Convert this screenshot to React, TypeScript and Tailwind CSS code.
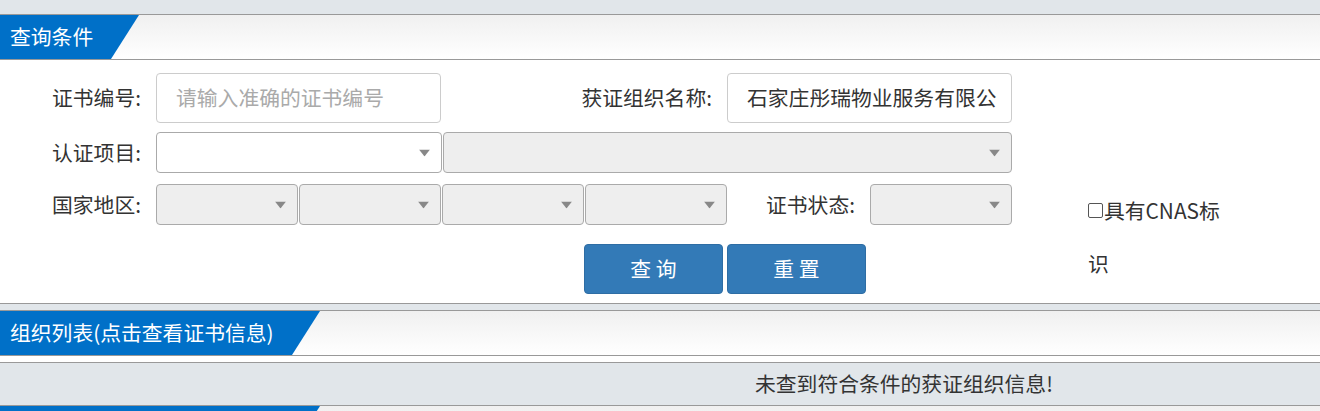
const font = {
  fontFamily: '"Noto Sans CJK SC", "Liberation Sans", sans-serif',
};

function SectionHeader({ title, tabWidth }: { title: string; tabWidth: string }) {
  return (
    <div className="h-[46px] border-y border-[#999] bg-gradient-to-b from-[#f0f0f0] to-white flex">
      <div
        className={`${tabWidth} h-full bg-[#0070c8] text-white text-[20.8px] pl-[10px] flex items-center [clip-path:polygon(0_0,100%_0,calc(100%-28px)_100%,0_100%)]`}
      >
        {title}
      </div>
    </div>
  );
}

function Arrow() {
  return (
    <svg width="11" height="7" viewBox="0 0 11 7" className="absolute right-[11px] top-1/2 -translate-y-1/2">
      <path d="M0 0 L11 0 L5.5 7 Z" fill="#888" />
    </svg>
  );
}

function Select({ width, white }: { width: string; white?: boolean }) {
  return (
    <div
      className={`${width} h-[41px] relative rounded-[4px] border border-[#aaa] ${
        white ? "bg-white" : "bg-[#eee]"
      }`}
    >
      <Arrow />
    </div>
  );
}

function Label({ text, width }: { text: string; width: string }) {
  return (
    <div className={`${width} shrink-0 text-right pr-[15px] text-[#333] text-[20.8px]`}>{text}</div>
  );
}

export default function App() {
  return (
    <div className="w-[1320px] bg-white" style={font}>
      <div className="h-[14px] bg-[#e1e6ea]" />
      <SectionHeader title="查询条件" tabWidth="w-[139px]" />

      <div className="pt-[13px] pb-[9px] border-b border-[#999]">
        {/* row 1 */}
        <div className="flex items-center h-[50px]">
          <Label text="证书编号:" width="w-[156px]" />
          <div className="w-[285px] h-[50px] rounded-[4px] border border-[#ccc] flex items-center pl-[19px] text-[20.8px] text-[#aaa]">
            请输入准确的证书编号
          </div>
          <Label text="获证组织名称:" width="w-[286px]" />
          <div className="w-[285px] h-[50px] rounded-[4px] border border-[#ccc] flex items-center pl-[19px] text-[20.8px] text-[#333] overflow-hidden whitespace-nowrap">
            石家庄彤瑞物业服务有限公
          </div>
        </div>

        {/* row 2 */}
        <div className="flex items-center mt-[9px] h-[41px]">
          <Label text="认证项目:" width="w-[156px]" />
          <Select width="w-[286px]" white />
          <div className="w-[1px]" />
          <Select width="w-[569px]" />
        </div>

        {/* rows 3 and 4 */}
        <div className="flex mt-[11px]">
          <div>
            <div className="flex items-center h-[41px]">
              <Label text="国家地区:" width="w-[156px]" />
              <div className="flex gap-[1px]">
                <Select width="w-[142px]" />
                <Select width="w-[142px]" />
                <Select width="w-[142px]" />
                <Select width="w-[142px]" />
              </div>
              <Label text="证书状态:" width="w-[143px]" />
              <Select width="w-[142px]" />
            </div>
            <div className="flex gap-[4px] pl-[584px] mt-[19px]">
              <div className="w-[139px] h-[50px] rounded-[4px] bg-[#337ab7] border border-[#2e6da4] text-white text-[20.8px] flex items-center justify-center">
                查 询
              </div>
              <div className="w-[139px] h-[50px] rounded-[4px] bg-[#337ab7] border border-[#2e6da4] text-white text-[20.8px] flex items-center justify-center">
                重 置
              </div>
            </div>
          </div>
          <div className="ml-[76px] text-[20.8px] text-[#333] leading-[53px]">
            <div className="flex items-center">
              <span className="w-[15px] h-[15px] shrink-0 rounded-[2px] border border-[#555] mr-[1px] inline-block" />
              具有CNAS标
            </div>
            <div>识</div>
          </div>
        </div>
      </div>

      <div className="h-[6px] bg-[#e1e6ea]" />
      <SectionHeader title="组织列表(点击查看证书信息)" tabWidth="w-[320px]" />
      <div className="h-[6px] bg-white" />
      <div className="h-[43px] border-t border-[#999] bg-[#e1e6ea] flex items-center pl-[755px] text-[20.8px] text-[#333]">
        未查到符合条件的获证组织信息!
      </div>
      <SectionHeader title="" tabWidth="w-[320px]" />
    </div>
  );
}
